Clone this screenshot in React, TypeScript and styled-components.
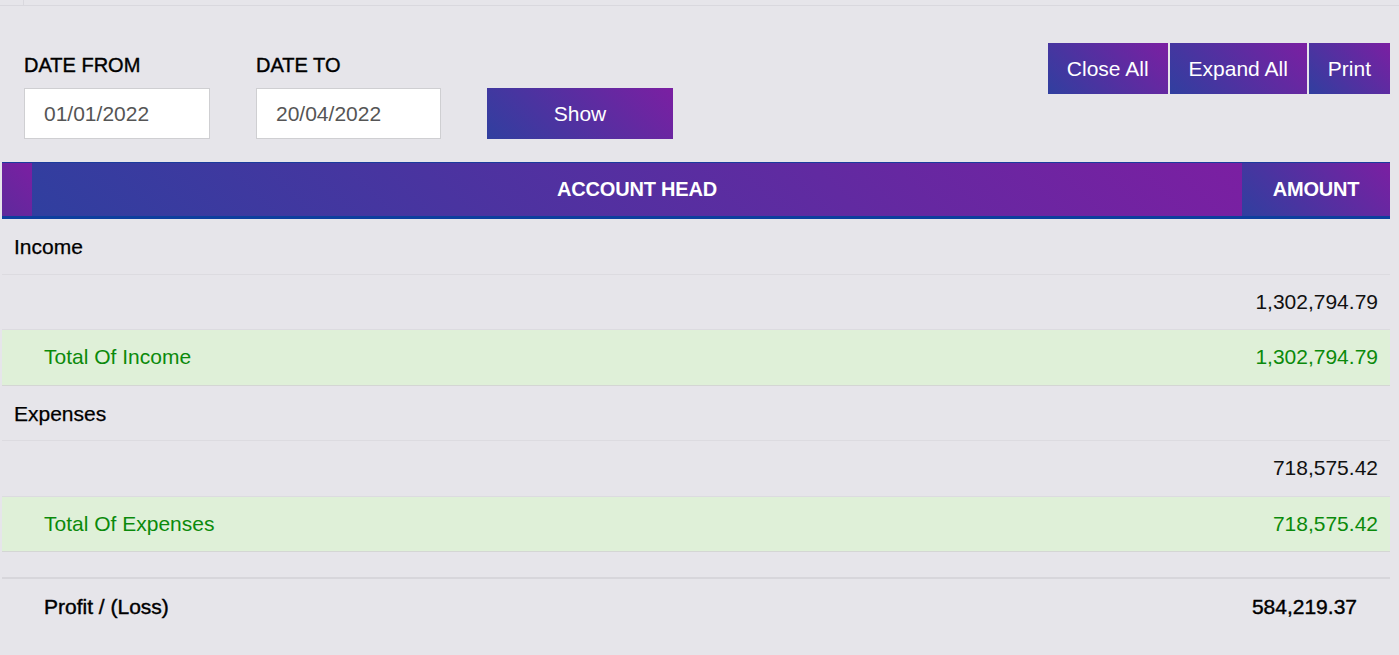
import React from "react";
import styled, { createGlobalStyle, css } from "styled-components";

const GlobalStyle = createGlobalStyle`
  html, body { margin: 0; padding: 0; background: #e6e5ea; }
  body { font-family: "Liberation Sans", Arial, Helvetica, sans-serif; color: #111; }
  * { box-sizing: border-box; }
`;

const brandGradient = "linear-gradient(45deg, #303f9f 0%, #7b1fa2 100%)";

const medium = css`
  font-weight: 400;
  -webkit-text-stroke: 0.4px currentColor;
`;

const Page = styled.div`
  min-height: 655px;
  background: #e6e5ea;
`;

const TopStrip = styled.div`
  height: 6px;
  border-bottom: 1px solid #d9d8de;
  display: flex;
`;

const StripCell = styled.div`
  width: 24px;
  border-right: 1px solid #d9d8de;
`;

const FilterBar = styled.div`
  display: flex;
  justify-content: space-between;
  align-items: flex-start;
  padding: 37px 9px 0 24px;
`;

const Fields = styled.div`
  display: grid;
  grid-template-columns: 186px 185px 186px;
  column-gap: 46px;
  align-items: end;
  margin-top: 11px;
`;

const Field = styled.div`
  display: flex;
  flex-direction: column;
`;

const Label = styled.label`
  font-size: 20px;
  ${medium};
  line-height: 23px;
  color: #000;
  margin-bottom: 11px;
`;

const DateInput = styled.div`
  height: 51px;
  background: #fff;
  border: 1px solid #cfcfd2;
  padding-left: 19px;
  display: flex;
  align-items: center;
  font-size: 21px;
  color: #555;
`;

const GradientButton = styled.button`
  height: 51px;
  border: none;
  background: ${brandGradient};
  color: #fff;
  font-family: inherit;
  font-size: 21px;
  display: flex;
  align-items: center;
  justify-content: center;
  cursor: pointer;
`;

const ShowButton = styled(GradientButton)`
  width: 186px;
`;

const Toolbar = styled.div`
  display: flex;
  gap: 2px;
`;

const ToolButton = styled(GradientButton)`
  padding: 0 19px;
`;

const Table = styled.div`
  margin: 23px 9px 0 2px;
`;

const HeaderRow = styled.div`
  display: grid;
  grid-template-columns: 30px 1fr 148px;
  height: 57px;
  border-top: 1px solid #1a3c9c;
  border-bottom: 3px solid #0d3f9e;
`;

const HeaderCell = styled.div<{ $lead?: boolean }>`
  background: ${(p) =>
    p.$lead ? "linear-gradient(45deg, #5e2a9c 0%, #7b1fa2 100%)" : brandGradient};
  color: #fff;
  font-weight: 700;
  font-size: 20px;
  letter-spacing: -0.2px;
  display: flex;
  align-items: center;
  justify-content: center;
`;

type Variant = "group" | "amount" | "total" | "spacer" | "profit";

const Row = styled.div<{ $variant: Variant }>`
  display: flex;
  align-items: center;
  justify-content: space-between;
  height: 55.5px;
  border-bottom: 1px solid #dcdbe0;
  font-size: 21px;
  color: #111;
  padding: 0 12px;
  ${(p) =>
    p.$variant === "group" &&
    css`
      color: #000;
      -webkit-text-stroke: 0.25px #000;
      padding-top: 2px;
    `}
  ${(p) =>
    p.$variant === "total" &&
    css`
      background: #dff0d8;
      color: #0b8a0b;
      border-bottom: 1px solid #d4d6d4;
      padding-left: 42px;
    `}
  ${(p) =>
    p.$variant === "amount" &&
    css`
      justify-content: flex-end;
    `}
  ${(p) =>
    p.$variant === "spacer" &&
    css`
      height: 27px;
      border-bottom: 2px solid #d7d6db;
    `}
  ${(p) =>
    p.$variant === "profit" &&
    css`
      border-bottom: none;
      ${medium};
      padding: 0 33px 0 42px;
      color: #000;
    `}
`;

const Cell = styled.span``;

export default function App() {
  return (
    <Page>
      <GlobalStyle />
      <TopStrip>
        <StripCell />
      </TopStrip>
      <FilterBar>
        <Fields>
          <Field>
            <Label>DATE FROM</Label>
            <DateInput>01/01/2022</DateInput>
          </Field>
          <Field>
            <Label>DATE TO</Label>
            <DateInput>20/04/2022</DateInput>
          </Field>
          <ShowButton>Show</ShowButton>
        </Fields>
        <Toolbar>
          <ToolButton>Close All</ToolButton>
          <ToolButton>Expand All</ToolButton>
          <ToolButton>Print</ToolButton>
        </Toolbar>
      </FilterBar>
      <Table>
        <HeaderRow>
          <HeaderCell $lead />
          <HeaderCell>ACCOUNT HEAD</HeaderCell>
          <HeaderCell>AMOUNT</HeaderCell>
        </HeaderRow>
        <Row $variant="group">
          <Cell>Income</Cell>
        </Row>
        <Row $variant="amount">
          <Cell>1,302,794.79</Cell>
        </Row>
        <Row $variant="total">
          <Cell>Total Of Income</Cell>
          <Cell>1,302,794.79</Cell>
        </Row>
        <Row $variant="group">
          <Cell>Expenses</Cell>
        </Row>
        <Row $variant="amount">
          <Cell>718,575.42</Cell>
        </Row>
        <Row $variant="total">
          <Cell>Total Of Expenses</Cell>
          <Cell>718,575.42</Cell>
        </Row>
        <Row $variant="spacer" />
        <Row $variant="profit">
          <Cell>Profit / (Loss)</Cell>
          <Cell>584,219.37</Cell>
        </Row>
      </Table>
    </Page>
  );
}
